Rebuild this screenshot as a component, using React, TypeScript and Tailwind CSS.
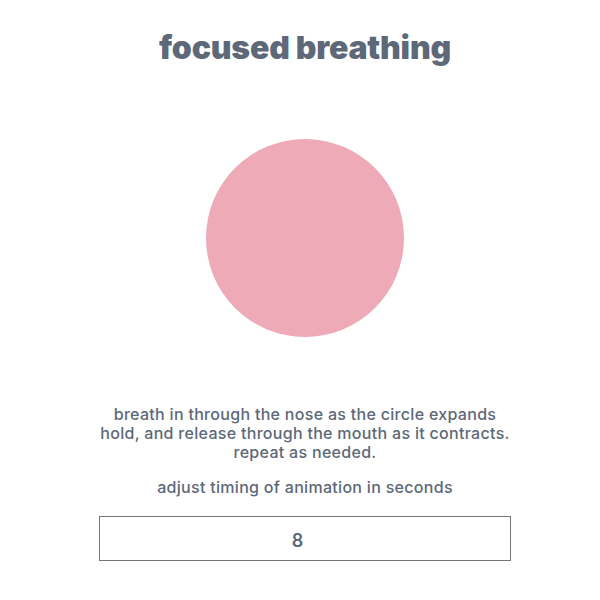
const App = () => {
  return (
    <div className="min-h-[600px] bg-white pl-[10px] font-['Inter','Liberation_Sans',sans-serif] text-[#5d6879]">
      <div className="flex flex-col items-center">
        <h1 className="mt-[26px] text-[32px] font-black leading-[44px] tracking-[-0.2px]">
          focused breathing
        </h1>
        <div className="mt-[69px] h-[198px] w-[198px] rounded-full bg-[#eeaab7]" />
        <div className="mt-[68px] text-center text-[16px] font-medium leading-[19px] tracking-[0.3px]">
          <p>breath in through the nose as the circle expands</p>
          <p>hold, and release through the mouth as it contracts.</p>
          <p>repeat as needed.</p>
        </div>
        <p className="mt-[16px] text-[16px] font-medium leading-[19px] tracking-[0.3px]">
          adjust timing of animation in seconds
        </p>
        <input
          type="number"
          defaultValue={8}
          className="mt-[19px] h-[45px] w-[412px] border border-[#767676] pt-[3px] text-center text-[18px] font-semibold text-[#5d6879] outline-none"
        />
      </div>
    </div>
  );
};

export default App;
